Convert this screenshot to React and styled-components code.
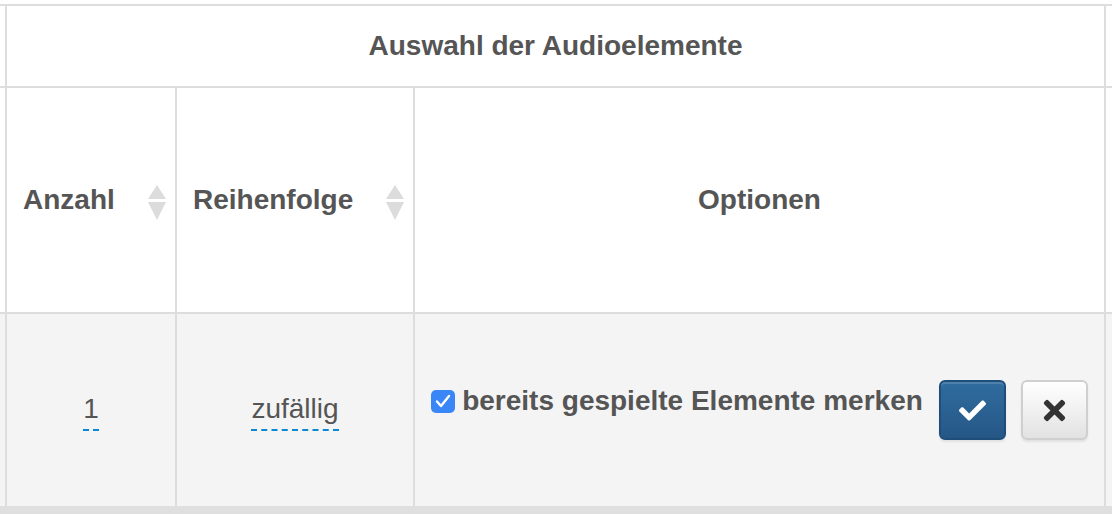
import React from "react";
import styled, { createGlobalStyle } from "styled-components";
import { FaCheck, FaTimes } from "react-icons/fa";

const GlobalStyle = createGlobalStyle`
  html, body { margin: 0; padding: 0; background: #fff; }
  body {
    font-family: "Liberation Sans", Arial, Helvetica, sans-serif;
    color: #555;
    font-size: 28px;
    line-height: 40px;
    overflow: hidden;
  }
`;

const Page = styled.div`
  padding-top: 4px;
  width: 1112px;
  height: 514px;
  box-sizing: border-box;
  overflow: hidden;
`;

const Table = styled.div`
  display: grid;
  grid-template-columns: 5px 168px 236px 689px 1fr;
  grid-template-rows: 80px 224px 192px;
  gap: 2px;
  background: #dddddd;
  border-top: 2px solid #dddddd;
  border-bottom: 10px solid #dfdfdf;
`;

const Cell = styled.div`
  background: ${(p) => (p.$shaded ? "#f4f4f4" : "#ffffff")};
  grid-column: ${(p) => p.$span || "auto"};
  display: flex;
  align-items: center;
  justify-content: ${(p) => p.$justify || "center"};
  box-sizing: border-box;
  min-width: 0;
`;

const HeadText = styled.span`
  font-weight: bold;
  font-size: 28px;
  line-height: 40px;
  color: #555;
  white-space: nowrap;
`;

const SortHead = styled(Cell)`
  justify-content: space-between;
  padding: 0 9px 0 16px;
`;

const SortIconSvg = styled.svg`
  width: 18px;
  height: 35px;
  margin-top: 5px;
  flex: none;
`;

const SortIcon = () => (
  <SortIconSvg viewBox="0 0 18 35">
    <polygon points="9,0 18,14 0,14" fill="#dcdcdc" />
    <polygon points="0,17 18,17 9,35" fill="#dcdcdc" />
  </SortIconSvg>
);

const Editable = styled.span`
  font-size: 28px;
  line-height: 40px;
  color: #555;
  border-bottom: 2px dashed #0a88d2;
  white-space: nowrap;
`;

const OptionsGroup = styled.div`
  display: flex;
  align-items: flex-start;
`;

const CheckLabel = styled.label`
  display: flex;
  align-items: center;
  font-weight: bold;
  font-size: 28px;
  line-height: 40px;
  color: #555;
  white-space: nowrap;
  margin-top: 1px;
  margin-right: 16px;
`;

const CheckBox = styled.span`
  width: 24px;
  height: 23px;
  border-radius: 5px;
  background: #3b86f6;
  display: flex;
  align-items: center;
  justify-content: center;
  margin-right: 7px;
  flex: none;
`;

const Button = styled.button`
  width: 67px;
  height: 60px;
  box-sizing: border-box;
  border-radius: 6px;
  display: flex;
  align-items: center;
  justify-content: center;
  padding: 0;
  margin: 0 0 0 ${(p) => p.$gap || 0}px;
  cursor: pointer;
  border: 2px solid ${(p) => (p.$primary ? "#1f4e7b" : "#cfcfcf")};
  color: ${(p) => (p.$primary ? "#fff" : "#333")};
  background: ${(p) =>
    p.$primary
      ? "linear-gradient(to bottom, #306c9f 0%, #255786 100%)"
      : "linear-gradient(to bottom, #ffffff 0%, #e2e2e2 100%)"};
  box-shadow: inset 0 2px 0 rgba(255, 255, 255, 0.15), 0 2px 2px rgba(0, 0, 0, 0.08);
`;

export default function App() {
  return (
    <>
      <GlobalStyle />
      <Page>
        <Table>
          <Cell />
          <Cell $span="2 / span 3">
            <HeadText>Auswahl der Audioelemente</HeadText>
          </Cell>
          <Cell />

          <Cell />
          <SortHead>
            <HeadText>Anzahl</HeadText>
            <SortIcon />
          </SortHead>
          <SortHead>
            <HeadText>Reihenfolge</HeadText>
            <SortIcon />
          </SortHead>
          <Cell>
            <HeadText>Optionen</HeadText>
          </Cell>
          <Cell />

          <Cell $shaded />
          <Cell $shaded>
            <Editable>1</Editable>
          </Cell>
          <Cell $shaded>
            <Editable>zufällig</Editable>
          </Cell>
          <Cell $shaded>
            <OptionsGroup>
              <CheckLabel>
                <CheckBox>
                  <svg width="16" height="14" viewBox="0 0 16 14">
                    <polyline
                      points="2,7.5 6,12 14,2"
                      fill="none"
                      stroke="#fff"
                      strokeWidth="2.4"
                      strokeLinecap="round"
                      strokeLinejoin="round"
                    />
                  </svg>
                </CheckBox>
                bereits gespielte Elemente merken
              </CheckLabel>
              <Button $primary>
                <FaCheck size={27} />
              </Button>
              <Button $gap={15}>
                <FaTimes size={31} />
              </Button>
            </OptionsGroup>
          </Cell>
          <Cell $shaded />
        </Table>
      </Page>
    </>
  );
}
